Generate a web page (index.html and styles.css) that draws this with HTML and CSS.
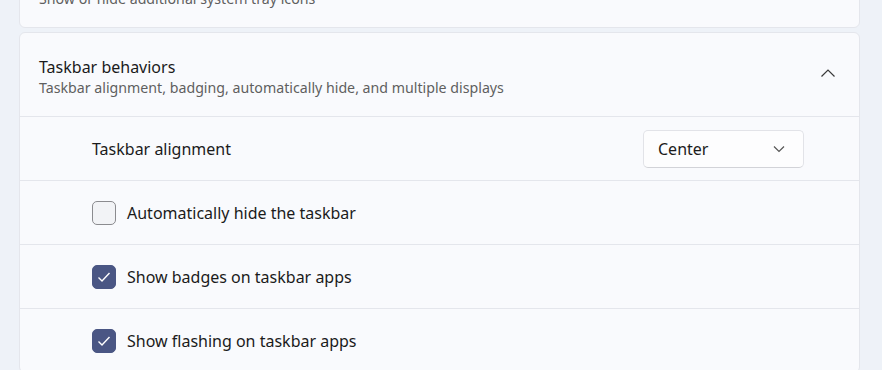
FILE: index.html
```html
<!DOCTYPE html>
<html lang="en">
<head>
    <meta charset="UTF-8">
    <meta name="viewport" content="width=device-width, initial-scale=1.0">
    <title>Taskbar</title>
    <link rel="stylesheet" href="styles.css">
</head>
<body>
    <div class="page">
        <!-- Previous card (scrolled) -->
        <div class="card card-prev">
            <div class="card-header">
                <div class="header-text">
                    <div class="title">Taskbar corner overflow</div>
                    <div class="subtitle">Show or hide additional system tray icons</div>
                </div>
            </div>
        </div>

        <!-- Taskbar behaviors -->
        <div class="card">
            <div class="card-header">
                <div class="header-text">
                    <div class="title">Taskbar behaviors</div>
                    <div class="subtitle">Taskbar alignment, badging, automatically hide, and multiple displays</div>
                </div>
                <svg class="chevron-up" width="16" height="10" viewBox="0 0 16 10">
                    <path d="M1.5 8.5 L8 2 L14.5 8.5" fill="none" stroke="#3a3a3a" stroke-width="1.2"/>
                </svg>
            </div>
            <div class="row">
                <span class="label">Taskbar alignment</span>
                <div class="dropdown">
                    <span>Center</span>
                    <svg width="12" height="8" viewBox="0 0 12 8">
                        <path d="M1 1.5 L6 6.5 L11 1.5" fill="none" stroke="#555" stroke-width="1.2"/>
                    </svg>
                </div>
            </div>
            <div class="row">
                <span class="checkbox"></span>
                <span class="label">Automatically hide the taskbar</span>
            </div>
            <div class="row">
                <span class="checkbox checked">
                    <svg width="16" height="16" viewBox="0 0 16 16">
                        <path d="M2.5 8.5 L6 12 L13.5 4" fill="none" stroke="#fff" stroke-width="1.4"/>
                    </svg>
                </span>
                <span class="label">Show badges on taskbar apps</span>
            </div>
            <div class="row">
                <span class="checkbox checked">
                    <svg width="16" height="16" viewBox="0 0 16 16">
                        <path d="M2.5 8.5 L6 12 L13.5 4" fill="none" stroke="#fff" stroke-width="1.4"/>
                    </svg>
                </span>
                <span class="label">Show flashing on taskbar apps</span>
            </div>
        </div>
    </div>
</body>
</html>
```
FILE: styles.css
```css
body {
    margin: 0;
    background-color: #eef2f8;
    font-family: "Noto Sans", "Open Sans", sans-serif;
    color: #1b1b1b;
    overflow: hidden;
}
.page {
    padding: 0 22px 0 19px;
    display: flex;
    flex-direction: column;
    gap: 4px;
}
.card {
    background-color: #f9fafd;
    border: 1px solid #e4e6ec;
    border-radius: 6px;
}
.card-prev {
    margin-top: -57px;
}
.card-header {
    height: 83px;
    box-sizing: border-box;
    display: flex;
    align-items: center;
    padding: 5px 23px 0 19px;
}
.header-text {
    flex: 1;
}
.title {
    font-size: 16px;
    line-height: 22px;
}
.subtitle {
    font-size: 14.2px;
    line-height: 20px;
    color: #5f5f5f;
}
.chevron-up {
    margin-top: -8px;
}
.row {
    height: 63px;
    border-top: 1px solid #e4e6ec;
    display: flex;
    align-items: center;
    padding: 0 55px 0 72px;
}
.row .label {
    font-size: 16px;
    flex: 1;
}
.dropdown {
    width: 161px;
    height: 38px;
    box-sizing: border-box;
    background-color: #fdfdfe;
    border: 1px solid #e2e3e8;
    border-bottom-color: #d2d3d8;
    border-radius: 5px;
    display: flex;
    align-items: center;
    justify-content: space-between;
    padding: 0 18px 0 14px;
    font-size: 16px;
}
.checkbox {
    width: 24px;
    height: 24px;
    box-sizing: border-box;
    border: 1px solid #8b8b8f;
    border-radius: 5px;
    background-color: #f2f3f6;
    margin-right: 11px;
    display: flex;
    align-items: center;
    justify-content: center;
}
.checkbox.checked {
    background-color: #4a5684;
    border-color: #4a5684;
}
```
